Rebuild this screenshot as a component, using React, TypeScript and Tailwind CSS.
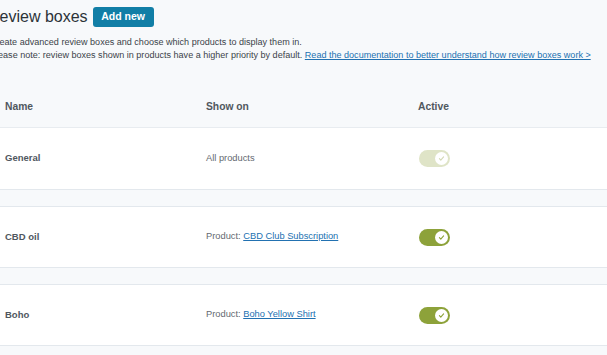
import React from "react";

type Box = {
  id: string;
  name: string;
  product?: string;
  enabled: boolean;
};

const boxes: Box[] = [
  { id: "general", name: "General", enabled: false },
  { id: "cbd", name: "CBD oil", product: "CBD Club Subscription", enabled: true },
  { id: "boho", name: "Boho", product: "Boho Yellow Shirt", enabled: true },
];

function Toggle({ on }: { on: boolean }) {
  return (
    <span
      className={`relative inline-flex h-[17px] w-[31px] items-center rounded-full ${
        on ? "bg-[#8da23a]" : "bg-[#dfe4c7]"
      }`}
    >
      <span className="absolute right-[2px] flex h-[13px] w-[13px] items-center justify-center rounded-full bg-white">
        <svg width="7" height="7" viewBox="0 0 10 10" fill="none">
          <path
            d="M2 5.2l2 2 4-4.4"
            stroke={on ? "#8da23a" : "#d3d9b6"}
            strokeWidth="1.6"
            strokeLinecap="round"
            strokeLinejoin="round"
          />
        </svg>
      </span>
    </span>
  );
}

export default function App() {
  return (
    <div className="h-[355px] w-[607px] overflow-hidden bg-[#f7f9fb] text-[#3c434a] font-['Liberation_Sans',Arial,sans-serif]">
      <div className="ml-[-10px] pt-[7px]">
        <div className="ml-[-2px] flex items-center gap-[5px]">
          <h1 className="text-[16px] leading-[20px] text-[#2c3338]">Review boxes</h1>
          <button
            type="button"
            className="h-[20px] w-[61px] rounded-[3px] bg-[#117ea6] text-[10.5px] font-bold text-white"
          >
            Add new
          </button>
        </div>
        <p className="mt-[9px] whitespace-nowrap text-[9.05px] leading-[13px]">
          Create advanced review boxes and choose which products to display them in.
          <br />
          Please note: review boxes shown in products have a higher priority by default.{" "}
          <a href="#" className="text-[#2271b1] underline">
            Read the documentation to better understand how review boxes work &gt;
          </a>
        </p>
      </div>

      <div className="mt-[24px] w-full">
        <div className="flex h-[42px] items-center border-b border-[#e8ecf0] text-[10.3px] font-bold text-[#50575e]">
          <div className="w-[206px] pl-[5px]">Name</div>
          <div className="w-[212px]">Show on</div>
          <div>Active</div>
        </div>
        <div className="flex flex-col gap-[16px]">
          {boxes.map((b, i) => (
            <div
              key={b.id}
              className={`flex h-[62px] items-center border-b border-[#e3e8ed] bg-white ${
                i > 0 ? "border-t" : ""
              }`}
            >
              <div className="w-[206px] pl-[5px] text-[9.5px] font-bold text-[#50575e]">{b.name}</div>
              <div className="w-[212px] text-[9.3px] text-[#646970]">
                {b.product ? (
                  <>
                    Product:{" "}
                    <a href="#" className="text-[#2271b1] underline">
                      {b.product}
                    </a>
                  </>
                ) : (
                  "All products"
                )}
              </div>
              <div className="flex pl-[1px]">
                <Toggle on={b.enabled} />
              </div>
            </div>
          ))}
        </div>
      </div>
    </div>
  );
}
